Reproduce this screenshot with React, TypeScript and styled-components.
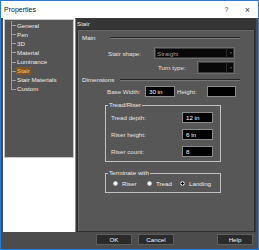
import { createGlobalStyle, styled } from "styled-components";

const GlobalStyle = createGlobalStyle`
  html, body {
    margin: 0;
    padding: 0;
    background: #ffffff;
  }
  body {
    font-family: "Liberation Sans", Arial, sans-serif;
  }
  * {
    box-sizing: border-box;
  }
`;

const Window = styled.div`
  width: 259px;
  height: 250px;
  border: 1px solid #2b7bd6;
  background: #4c4c4c;
  display: flex;
  flex-direction: column;
  overflow: hidden;
  font-size: 6.2px;
  color: #ececec;
`;

const TitleBar = styled.div`
  flex: none;
  height: 17px;
  background: #ffffff;
  color: #111111;
  display: flex;
  align-items: center;
  padding-left: 3px;
  font-size: 7px;
`;

const TitleText = styled.span`
  flex: 1;
`;

const TitleButton = styled.span`
  width: 21px;
  text-align: center;
  color: #333333;
  font-size: ${(p: { big?: boolean }) => (p.big ? "9px" : "7px")};
`;

const Body = styled.div`
  flex: 1;
  display: flex;
  flex-direction: column;
  padding: 0 2px;
`;

const MainRow = styled.div`
  height: 214px;
  display: flex;
`;

const LeftPane = styled.div`
  width: 72px;
  background: #ffffff;
  padding: 1px;
`;

const Tree = styled.div`
  height: 139px;
  background: #545454;
  border: 1px solid #c6c6c6;
  padding-top: 0.5px;
`;

const TreeItem = styled.div<{ $last?: boolean }>`
  position: relative;
  height: 9.15px;
  line-height: 9.15px;
  padding-left: 12px;
  white-space: nowrap;
  &::before {
    content: "";
    position: absolute;
    left: 6px;
    top: 0;
    height: ${(p) => (p.$last ? "50%" : "100%")};
    border-left: 1px solid #9c9c9c;
  }
  &::after {
    content: "";
    position: absolute;
    left: 6px;
    top: 50%;
    width: 5px;
    border-top: 1px solid #9c9c9c;
  }
`;

const ItemLabel = styled.span<{ $active?: boolean }>`
  display: inline-block;
  line-height: 8px;
  padding: 0 1px;
  margin-left: -1px;
  background: ${(p) => (p.$active ? "#7d5526" : "transparent")};
  color: ${(p) => (p.$active ? "#ffc46e" : "#ececec")};
`;

const RightPane = styled.div`
  width: 181px;
  border-left: 1px solid #8a8a8a;
  border-top: 1px solid #3a3a3a;
  background: #363636;
  display: flex;
  flex-direction: column;
  padding-right: 1px;
`;

const PaneHeader = styled.div`
  height: 10px;
  line-height: 10px;
  padding-left: 1px;
  color: #ececec;
`;

const Content = styled.div`
  flex: 1;
  margin-left: 1px;
  background: #575757;
  border: 1px solid #2e2e2e;
  box-shadow: inset 1px 1px 0 #6a6a6a;
  padding: 3px 0 0 4px;
`;

const SectionHead = styled.div<{ $top?: number }>`
  display: flex;
  align-items: center;
  height: 9px;
  margin-top: ${(p) => p.$top ?? 0}px;
  padding-right: 14px;
`;

const SectionLabel = styled.span<{ $w: number }>`
  width: ${(p) => p.$w}px;
  flex: none;
`;

const Rule = styled.div`
  flex: 1;
  height: 2px;
  border-top: 1px solid #262626;
  border-bottom: 1px solid #767676;
`;

const Row = styled.div<{ $indent: number; $h: number; $top: number }>`
  display: flex;
  align-items: center;
  height: ${(p) => p.$h}px;
  margin-top: ${(p) => p.$top}px;
  padding-left: ${(p) => p.$indent}px;
`;

const Label = styled.span<{ $w: number; $gap?: number }>`
  width: ${(p) => p.$w}px;
  margin-left: ${(p) => p.$gap ?? 0}px;
  flex: none;
  color: #e2e2e2;
  white-space: nowrap;
`;

const Select = styled.div<{ $w: number }>`
  width: ${(p) => p.$w}px;
  height: 100%;
  display: flex;
  align-items: center;
  background: #080808;
  border: 1px solid #6e6e6e;
  box-shadow: inset 0 0 0 1px #3c3c3c;
  color: #9a9a9a;
  padding-left: 2px;
`;

const SelectText = styled.span`
  flex: 1;
`;

const Arrow = styled.span`
  width: 8px;
  height: 100%;
  display: flex;
  align-items: center;
  justify-content: center;
  border-left: 1px solid #2a2a2a;
  &::after {
    content: "";
    border-left: 1.5px solid transparent;
    border-right: 1.5px solid transparent;
    border-top: 2px solid #5e5e5e;
  }
`;

const Input = styled.div<{ $w: number }>`
  width: ${(p) => p.$w}px;
  height: 100%;
  background: #000000;
  border: 1px solid #8c8c8c;
  color: #ffffff;
  padding-left: 3px;
  line-height: 9px;
`;

const Group = styled.fieldset<{ $top: number; $pb: number; $pt: number }>`
  margin: ${(p) => p.$top}px 0 0 23px;
  width: 116px;
  border: 1px solid #c2c2c2;
  padding: ${(p) => p.$pt}px 0 ${(p) => p.$pb}px 5px;
  min-width: 0;
`;

const Legend = styled.legend`
  margin-left: -3px;
  padding: 0 1px;
  line-height: 8px;
  color: #ececec;
`;

const GroupRows = styled.div`
  display: flex;
  flex-direction: column;
  gap: 6px;
`;

const GroupRow = styled.div`
  display: flex;
  align-items: center;
  height: 11px;
`;

const RadioRow = styled.div`
  display: grid;
  grid-template-columns: 34px 33px auto;
  height: 8px;
  align-items: center;
  padding-left: 2px;
`;

const Radio = styled.label`
  display: flex;
  align-items: center;
  gap: 4px;
`;

const Dot = styled.span<{ $on?: boolean }>`
  width: 5px;
  height: 5px;
  border-radius: 50%;
  border: 0.5px solid #bdbdbd;
  background: ${(p) =>
    p.$on ? "radial-gradient(circle, #000 0 1.1px, #fff 1.3px)" : "#ffffff"};
`;

const ButtonRow = styled.div`
  display: flex;
  padding: 2px 3px 0 93px;
  gap: 6px;
`;

const Button = styled.button<{ $push?: boolean }>`
  width: 36px;
  height: 11px;
  padding: 0;
  margin-left: ${(p) => (p.$push ? "auto" : "0")};
  background: #2b2b2b;
  border: 1px solid #5e5e5e;
  color: #f4f4f4;
  font: inherit;
  font-size: 6.2px;
  line-height: 9px;
`;

const treeItems = [
  "General",
  "Pen",
  "3D",
  "Material",
  "Luminance",
  "Stair",
  "Stair Materials",
  "Custom",
];

export default function App() {
  return (
    <>
      <GlobalStyle />
      <Window>
        <TitleBar>
          <TitleText>Properties</TitleText>
          <TitleButton>?</TitleButton>
          <TitleButton big>×</TitleButton>
        </TitleBar>
        <Body>
          <MainRow>
            <LeftPane>
              <Tree>
                {treeItems.map((name, i) => (
                  <TreeItem key={name} $last={i === treeItems.length - 1}>
                    <ItemLabel $active={name === "Stair"}>{name}</ItemLabel>
                  </TreeItem>
                ))}
              </Tree>
            </LeftPane>
            <RightPane>
              <PaneHeader>Stair</PaneHeader>
              <Content>
                <SectionHead>
                  <SectionLabel $w={28}>Main</SectionLabel>
                  <Rule />
                </SectionHead>
                <Row $indent={26} $h={12} $top={5}>
                  <Label $w={46}>Stair shape:</Label>
                  <Select $w={81}>
                    <SelectText>Straight</SelectText>
                    <Arrow />
                  </Select>
                </Row>
                <Row $indent={76} $h={13} $top={2}>
                  <Label $w={39}>Turn type:</Label>
                  <Select $w={38}>
                    <SelectText />
                    <Arrow />
                  </Select>
                </Row>
                <SectionHead $top={1}>
                  <SectionLabel $w={38}>Dimensions</SectionLabel>
                  <Rule />
                </SectionHead>
                <Row $indent={25} $h={11} $top={2}>
                  <Label $w={38}>Base Width:</Label>
                  <Input $w={30}>30 in</Input>
                  <Label $w={30} $gap={2}>
                    Height:
                  </Label>
                  <Input $w={29} />
                </Row>
                <Group $top={4} $pt={3} $pb={4}>
                  <Legend>Tread/Riser</Legend>
                  <GroupRows>
                    <GroupRow>
                      <Label $w={71}>Tread depth:</Label>
                      <Input $w={31}>12 in</Input>
                    </GroupRow>
                    <GroupRow>
                      <Label $w={71}>Riser height:</Label>
                      <Input $w={31}>6 in</Input>
                    </GroupRow>
                    <GroupRow>
                      <Label $w={71}>Riser count:</Label>
                      <Input $w={31}>8</Input>
                    </GroupRow>
                  </GroupRows>
                </Group>
                <Group $top={7} $pt={2} $pb={5}>
                  <Legend>Terminate with</Legend>
                  <RadioRow>
                    <Radio>
                      <Dot />
                      Riser
                    </Radio>
                    <Radio>
                      <Dot />
                      Tread
                    </Radio>
                    <Radio>
                      <Dot $on />
                      Landing
                    </Radio>
                  </RadioRow>
                </Group>
              </Content>
            </RightPane>
          </MainRow>
          <ButtonRow>
            <Button>OK</Button>
            <Button>Cancel</Button>
            <Button $push>Help</Button>
          </ButtonRow>
        </Body>
      </Window>
    </>
  );
}
